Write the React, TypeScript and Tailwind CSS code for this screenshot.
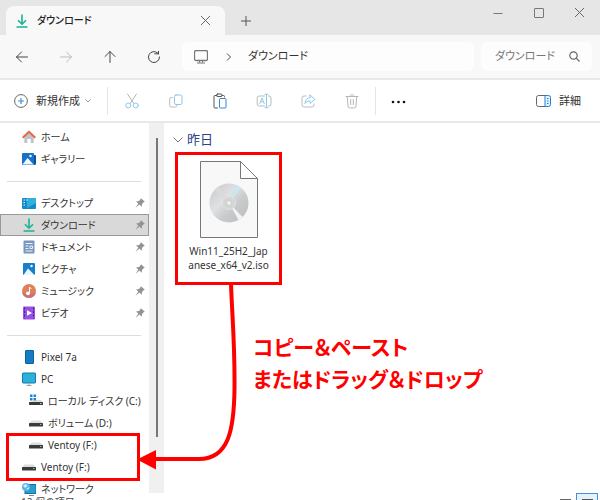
import type { ReactNode } from "react";
import { clsx } from "clsx";

type IconName =
  | "home"
  | "gallery"
  | "desktop"
  | "download"
  | "document"
  | "picture"
  | "music"
  | "video"
  | "phone"
  | "pc"
  | "system"
  | "drive"
  | "network";

type Place = {
  label: string;
  icon: IconName;
  pinned?: boolean;
  selected?: boolean;
  nested?: boolean;
};

const topPlaces: Place[] = [
  { label: "ホーム", icon: "home" },
  { label: "ギャラリー", icon: "gallery" },
];

const quickAccess: Place[] = [
  { label: "デスクトップ", icon: "desktop", pinned: true },
  { label: "ダウンロード", icon: "download", pinned: true, selected: true },
  { label: "ドキュメント", icon: "document", pinned: true },
  { label: "ピクチャ", icon: "picture", pinned: true },
  { label: "ミュージック", icon: "music", pinned: true },
  { label: "ビデオ", icon: "video", pinned: true },
];

const devices: Place[] = [
  { label: "Pixel 7a", icon: "phone" },
  { label: "PC", icon: "pc" },
  { label: "ローカル ディスク (C:)", icon: "system", nested: true },
  { label: "ボリューム (D:)", icon: "drive", nested: true },
];

const ventoyDrives: Place[] = [
  { label: "Ventoy (F:)", icon: "drive", nested: true },
  { label: "Ventoy (F:)", icon: "drive" },
];

export default function App() {
  return (
    <div className="relative flex h-screen flex-col overflow-hidden bg-white font-['Noto_Sans','Noto_Sans_CJK_JP',sans-serif] text-[11px] text-[#333] [font-feature-settings:'palt']">
      <TitleBar />
      <AddressBar />
      <Toolbar />
      <div className="flex min-h-0 flex-1">
        <Sidebar />
        <FileArea />
      </div>
      <StatusBar />
      <DragArrow />
    </div>
  );
}

function TitleBar() {
  return (
    <header className="flex h-[35px] shrink-0 items-end bg-[#e6e6e6] pl-[6px]">
      <div className="flex h-[29px] w-[219px] items-center rounded-t-lg bg-[#f8f8f8] pr-[14px] pl-[9px]">
        <PlaceIcon name="download" />
        <span className="ml-2 flex-1 text-[10px] font-medium text-[#222]">ダウンロード</span>
        <button aria-label="タブを閉じる">
          <Cross className="size-[11px]" />
        </button>
      </div>
      <button aria-label="新しいタブ" className="flex h-[29px] w-[41px] items-center justify-center">
        <svg viewBox="0 0 10 10" className="size-[10px]" fill="none" stroke="#555">
          <path d="M5 0v10M0 5h10" />
        </svg>
      </button>
      <div className="mb-[9px] ml-auto flex h-[27px] items-center">
        <button aria-label="最小化" className="flex w-[41px] justify-center">
          <svg viewBox="0 0 10 10" className="size-[10px]" fill="none" stroke="#777">
            <path d="M0.500 5.500h9" />
          </svg>
        </button>
        <button aria-label="最大化" className="flex w-[41px] justify-center">
          <svg viewBox="0 0 10 10" className="size-[10px]" fill="none" stroke="#777">
            <rect x="0.500" y="0.500" width="9" height="9" rx="0.500" />
          </svg>
        </button>
        <button aria-label="閉じる" className="flex w-[41px] justify-center">
          <Cross className="size-[11px]" />
        </button>
      </div>
    </header>
  );
}

function Cross({ className }: { className: string }) {
  return (
    <svg viewBox="0 0 11 11" className={className} fill="none" stroke="#666">
      <path d="M1 1l9 9M10 1l-9 9" />
    </svg>
  );
}

function NavButton({ label, children }: { label: string; children: ReactNode }) {
  return (
    <button aria-label={label} className="flex w-11 justify-center">
      <svg viewBox="0 0 12 12" className="size-3" fill="none" stroke="currentColor" strokeLinecap="round" strokeLinejoin="round">
        {children}
      </svg>
    </button>
  );
}

function AddressBar() {
  return (
    <div className="flex h-[45px] shrink-0 items-center border-b-2 border-[#e8e8e8] bg-[#f8f8f8] pr-2 text-[#444]">
      <NavButton label="戻る">
        <path d="M11.500 6h-11M5.500 1L0.500 6l5 5" />
      </NavButton>
      <div className="text-[#bbb]">
        <NavButton label="進む">
          <path d="M0.500 6h11M6.500 1l5 5l-5 5" />
        </NavButton>
      </div>
      <NavButton label="上へ">
        <path d="M6 11.500v-11M1 5.500L6 0.500l5 5" />
      </NavButton>
      <NavButton label="更新">
        <path d="M11.500 6A5.500 5.500 0 1 1 9.500 1.800M6.800 2.800h3.700M10.500 0v2.800" />
      </NavButton>
      <div className="ml-[6px] flex h-[29px] flex-1 items-center rounded-md bg-[#fdfdfd] pl-3 text-[#333]">
        <svg viewBox="0 0 14 14" className="size-[14px]" fill="none" stroke="#777">
          <rect x="0.500" y="0.500" width="13" height="10" rx="1.500" strokeWidth="1.300" />
          <path d="M3 13h8M5.500 10.500v2M8.500 10.500v2" />
        </svg>
        <svg viewBox="0 0 6 8" className="mr-4 ml-[18px] h-2 w-[6px]" fill="none" stroke="#444">
          <path d="M1 0.500L4.500 4L1 7.500" />
        </svg>
        <span>ダウンロード</span>
      </div>
      <label className="ml-[7px] flex h-[29px] w-[111px] items-center rounded-md bg-[#fdfdfd] pr-3 pl-[14px]">
        <input
          aria-label="検索"
          placeholder="ダウンロード"
          className="w-0 flex-1 bg-transparent outline-none placeholder:text-[#777]"
        />
        <svg viewBox="0 0 11 11" className="size-[11px]" fill="none" stroke="#666" strokeWidth="1.200">
          <circle cx="4.500" cy="4.500" r="3.700" />
          <path d="M7.200 7.200L10.500 10.500" />
        </svg>
      </label>
    </div>
  );
}

function ToolButton({ label, children }: { label: string; children: ReactNode }) {
  return (
    <button aria-label={label} className="flex w-11 justify-center">
      <svg viewBox="0 0 16 16" className="size-4" fill="none" strokeLinecap="round" strokeLinejoin="round">
        {children}
      </svg>
    </button>
  );
}

function Toolbar() {
  return (
    <div className="flex h-[43px] shrink-0 items-center border-b-2 border-[#e8e8e8] bg-white">
      <button className="flex w-[107px] items-center pl-[14px]">
        <svg viewBox="0 0 14 14" className="size-[14px]" fill="none">
          <circle cx="7" cy="7" r="6.400" stroke="#666" />
          <path d="M7 4v6M4 7h6" stroke="#3c8fd4" strokeWidth="1.200" />
        </svg>
        <span className="ml-2 flex-1 pt-[2px] text-left">新規作成</span>
        <svg viewBox="0 0 6 4" className="mr-4 h-1 w-[6px]" fill="none" stroke="#999">
          <path d="M0.500 0.500L3 3L5.500 0.500" />
        </svg>
      </button>
      <div className="h-7 w-px bg-[#e5e5e5]" />
      <div className="flex pl-[2px]">
        <ToolButton label="切り取り">
          <path d="M3.500 1l6.300 9.500M12.500 1L6.200 10.500" stroke="#b5b5b5" />
          <circle cx="4.200" cy="12.500" r="2.500" stroke="#8fcaf0" />
          <circle cx="11.800" cy="12.500" r="2.500" stroke="#8fcaf0" />
        </ToolButton>
        <ToolButton label="コピー">
          <path d="M4.500 4.500H3.200A1.500 1.500 0 0 0 1.700 6v6.500A1.500 1.500 0 0 0 3.200 14H7.500a1.500 1.500 0 0 0 1.500-1.500" stroke="#bbb" />
          <rect x="6.500" y="2" width="7.500" height="9.500" rx="1.500" stroke="#8fc4ec" />
        </ToolButton>
        <ToolButton label="貼り付け">
          <path d="M5 2.500H3A1 1 0 0 0 2 3.500v10.500a1 1 0 0 0 1 1H5.500M10 2.500h1.500a1 1 0 0 1 1 1V4" stroke="#555" />
          <rect x="4.500" y="1" width="5.500" height="2.500" rx="1" stroke="#555" />
          <rect x="7.500" y="5.500" width="6.500" height="9.500" rx="1" stroke="#3c84cc" />
        </ToolButton>
        <ToolButton label="名前の変更">
          <path d="M8.500 3H3.200A2 2 0 0 0 1.200 5v6a2 2 0 0 0 2 2H8.500M12.500 3h.5a2 2 0 0 1 2 2v6a2 2 0 0 1-2 2h-.5" stroke="#bbb" />
          <path d="M3.700 10.500L6 5l2.300 5.500M4.500 8.800h3M10.500 1.500v13M9 1.300h3M9 14.700h3" stroke="#8fcaf0" />
        </ToolButton>
        <ToolButton label="共有">
          <path d="M6 3H4A2 2 0 0 0 2 5v7a2 2 0 0 0 2 2h8a2 2 0 0 0 2-2v-1" stroke="#bbb" />
          <path d="M10 2l5 4.300l-5 4.200V8C7.500 8 6 9 5 10.500C5.200 7 7 4.700 10 4.500z" stroke="#8fcaf0" />
        </ToolButton>
        <ToolButton label="削除">
          <path d="M2 3.500h12M6 3.500C6 0.800 10 0.800 10 3.500M3.200 3.500l.9 10a1.500 1.500 0 0 0 1.500 1.400h4.800a1.500 1.500 0 0 0 1.500-1.400l.9-10M6.700 6.500v5M9.300 6.500v5" stroke="#b5b5b5" />
        </ToolButton>
      </div>
      <div className="ml-px h-7 w-px bg-[#e5e5e5]" />
      <ToolButton label="もっと見る">
        <g fill="#111">
          <circle cx="3" cy="9" r="1.300" />
          <circle cx="8.500" cy="9" r="1.300" />
          <circle cx="14" cy="9" r="1.300" />
        </g>
      </ToolButton>
      <button className="mr-[19px] ml-auto flex items-center gap-2">
        <svg viewBox="0 0 15 12" className="h-3 w-[15px]" fill="none">
          <path d="M9 0.500H2.500a2 2 0 0 0-2 2v7a2 2 0 0 0 2 2H9" stroke="#666" />
          <path d="M9 0.500h3.500a2 2 0 0 1 2 2v7a2 2 0 0 1-2 2H9z" fill="#e0f2ff" stroke="#2780d0" />
          <path d="M11 3.500h1.500M11 6h1.500M11 8.500h1.500" stroke="#2780d0" />
        </svg>
        <span className="pt-[2px]">詳細</span>
      </button>
    </div>
  );
}

function Sidebar() {
  return (
    <div className="flex shrink-0 text-[10px] leading-3">
      <nav className="w-[149px] pt-[3px]">
        <PlaceList places={topPlaces} />
        <Divider />
        <PlaceList places={quickAccess} />
        <Divider />
        <PlaceList places={devices} />
        <div className="relative">
          <PlaceList places={ventoyDrives} />
          <div className="pointer-events-none absolute -top-px right-[9px] -bottom-[3px] left-[6px] border-3 border-[#f00]" />
        </div>
        <PlaceList places={[{ label: "ネットワーク", icon: "network" }]} />
      </nav>
      <div className="flex w-[15px] justify-center bg-[#f0f0f0] pt-[15px] pb-14">
        <div className="w-[2px] bg-[#777]" />
      </div>
    </div>
  );
}

function Divider() {
  return (
    <div className="flex h-[22px] items-center pr-2 pl-[7px]">
      <hr className="w-full border-[#ddd]" />
    </div>
  );
}

function PlaceList({ places }: { places: Place[] }) {
  return (
    <ul>
      {places.map((p, i) => (
        <li key={p.label + i}>
          <a
            href="#"
            className={clsx(
              "flex h-[22px] items-center gap-[5px] border pr-[3px] whitespace-nowrap",
              p.nested ? "pl-7" : "pl-[21px]",
              p.selected ? "border-[#999] bg-[#d9d9d9]" : "border-transparent",
            )}
          >
            <PlaceIcon name={p.icon} />
            <span className="flex-1">{p.label}</span>
            {p.pinned && <Pin />}
          </a>
        </li>
      ))}
    </ul>
  );
}

function Pin() {
  return (
    <svg viewBox="0 0 10 10" className="size-[10px]" fill="#8f9499">
      <path d="M6 0.300L9.800 3.800L8.300 4.600L7 6L6.800 8.700L4.400 6.600L0.400 9.900L3.300 5.600L1 3.500L4 3L5.200 1.700z" />
    </svg>
  );
}

function PlaceIcon({ name }: { name: IconName }) {
  return (
    <svg viewBox="0 0 14 14" className="size-[14px] shrink-0" fill="none">
      {iconShapes[name]}
    </svg>
  );
}

const iconShapes: Record<IconName, ReactNode> = {
  home: (
    <>
      <path d="M2.300 6.500L7 2.500l4.700 4V13H8.700V9H5.300v4h-3z" fill="#bfc5cc" />
      <path d="M0.700 7.700L7 1.700l6.300 6" stroke="#e56a43" strokeWidth="2" strokeLinejoin="round" />
    </>
  ),
  gallery: (
    <>
      <path d="M12 3h1a1 1 0 0 1 1 1v8.500L12 13z" fill="#17508f" />
      <rect y="1" width="12" height="12" rx="1" fill="#1673c8" />
      <path d="M0.500 12.500L5.500 6L11.500 12.500z" fill="#f2f9ff" />
      <circle cx="8.500" cy="4" r="1.200" fill="#fff" />
    </>
  ),
  desktop: (
    <>
      <rect y="2" width="14" height="11" rx="1" fill="#1689cc" />
      <path d="M5 2h8a1 1 0 0 1 1 1v4L5 12z" fill="#2eb2dc" />
      <path d="M1.500 4h1.500M4 4h1.500M1.500 6.500h1.500M1.500 9h1.500" stroke="#d9f6ff" />
    </>
  ),
  download: (
    <path d="M7 0.500v9.500M3 6.200l4 4l4-4M1.500 13h11" stroke="#1bb394" strokeWidth="1.600" />
  ),
  document: (
    <>
      <rect x="1.500" y="0.500" width="11" height="13" rx="1" fill="#7897bd" />
      <path d="M3.500 3.500h7M3.500 6h3M3.500 8.500h3M8 6h2.500v2.500H8zM3.500 11h7" stroke="#edf4fc" />
    </>
  ),
  picture: (
    <>
      <rect x="1" y="1" width="12" height="12" rx="1" fill="#147fca" />
      <path d="M1.500 13L6 6.500L12.500 13z" fill="#e9f7ff" />
      <circle cx="9.500" cy="4" r="1.200" fill="#fff" />
    </>
  ),
  music: (
    <>
      <circle cx="7" cy="7" r="7" fill="#df8058" />
      <path d="M0.200 8.500A7 7 0 0 0 13.800 8.500C10 11 4 11 0.200 8.500z" fill="#c96f7c" />
      <circle cx="6" cy="9.300" r="1.900" fill="#fff" />
      <path d="M7.500 9.300V3L9.500 5" stroke="#fff" />
    </>
  ),
  video: (
    <>
      <rect x="1" y="0.500" width="12" height="13" rx="1" fill="#9750e3" />
      <path d="M2.500 1.500v11M11.500 1.500v11" stroke="#40208b" strokeDasharray="2 1.500" />
      <path d="M5 4.200L10 7L5 9.800z" fill="#fff" />
    </>
  ),
  phone: (
    <rect x="3.500" y="0.500" width="8" height="13" rx="0.500" fill="#147bc4" stroke="#0b609d" />
  ),
  pc: (
    <>
      <rect x="0.500" y="1" width="13" height="10" rx="0.500" fill="#2ab3d5" stroke="#1877b7" />
      <path d="M7 11v2.500M4.500 13.500h5" stroke="#9ba3a9" />
    </>
  ),
  system: (
    <>
      <path d="M6 6h6l2 2.500H0z" fill="#ddd" />
      <path d="M1 0.500h2.500v2.500H1zM4.500 0.500h2.500v2.500H4.500zM1 4h2.500v2.500H1zM4.500 4h2.500v2.500H4.500z" fill="#1686d8" />
      <rect y="8" width="14" height="3" rx="0.500" fill="#3a3a3a" />
      <rect x="11" y="9" width="1.500" height="1" fill="#ccc" />
    </>
  ),
  drive: (
    <>
      <path d="M2.500 4.500h9L14 7.500H0z" fill="#ddd" />
      <rect y="7" width="14" height="3.500" rx="0.500" fill="#3a3a3a" />
      <rect x="11" y="8" width="1.500" height="1" fill="#6fd66f" />
    </>
  ),
  network: (
    <>
      <rect x="3" y="2.500" width="11" height="9" fill="#299dce" stroke="#156da9" />
      <path d="M7 13.500h5" stroke="#888" />
      <circle cx="4" cy="5" r="4" fill="#5ab5e5" />
      <path d="M1 3.500L4 2l1.500 2L3 6zM4.500 6.500L7.500 5L6 8z" fill="#d0eff9" />
    </>
  ),
};

function FileArea() {
  return (
    <main className="min-w-0 flex-1 pt-2 pl-[9px]">
      <h2 className="flex h-[18px] items-center gap-1 text-[13px] text-[#2c4282]">
        <svg viewBox="0 0 10 6" className="h-[6px] w-[10px]" fill="none" stroke="#777">
          <path d="M0.500 0.500L5 5L9.500 0.500" />
        </svg>
        昨日
      </h2>
      <figure className="mt-[3px] ml-[2px] flex h-[133px] w-[107px] flex-col items-center border-3 border-[#f00] pt-[6px]">
        <DiscImage />
        <figcaption className="mt-[6px] text-center text-[10px] leading-[14px]">
          Win11_25H2_Jap
          <br />
          anese_x64_v2.iso
        </figcaption>
      </figure>
      <p className="mt-[46px] ml-20 text-[21px] leading-8 font-bold text-[#f00]">
        コピー＆ペースト
        <br />
        またはドラッグ＆ドロップ
      </p>
    </main>
  );
}

function DiscImage() {
  return (
    <svg viewBox="0 0 58 77" className="h-[77px] w-[58px]">
      <defs>
        <linearGradient id="disc" x1="0" y1="0" x2="1" y2="1">
          <stop offset="0" stopColor="#c4c6c8" />
          <stop offset="0.400" stopColor="#e0e1e2" />
          <stop offset="0.600" stopColor="#c9cbcc" />
          <stop offset="1" stopColor="#b9bbbd" />
        </linearGradient>
      </defs>
      <path d="M0.500 0.500h40l17 17v59h-57z" fill="#f8f8f8" stroke="#777" />
      <path d="M40.500 0.500v17h17z" fill="#fff" stroke="#777" />
      <circle cx="29" cy="42" r="19.500" fill="url(#disc)" />
      <path d="M29 42L36 24a19.500 19.500 0 0 1 5 3z" fill="#c9e6f2" />
      <path d="M29 42L42.500 56a19.500 19.500 0 0 1-4 3z" fill="#f4f4f4" />
      <path d="M29 42L14 29.500a19.500 19.500 0 0 1 5-4.500z" fill="#d8d9da" />
      <circle cx="29" cy="42" r="6.500" fill="#d4d5d6" stroke="#e4e4e4" />
      <circle cx="29" cy="42" r="2.500" fill="#f0f0f0" stroke="#ccc" />
    </svg>
  );
}

function StatusBar() {
  return (
    <footer className="flex h-[7px] shrink-0 items-start pr-[2px] pl-[21px] text-[10px] leading-3 text-[#444]">
      <span className="pt-[3px]">12 個の項目</span>
      <div className="ml-auto flex items-start gap-1">
        <button aria-label="詳細表示" className="px-[1px] pt-[6px]">
          <svg viewBox="0 0 11 8" className="h-2 w-[11px]" fill="none" stroke="#666">
            <path d="M0 0.500h11M0 3.500h11M0 6.500h11" />
          </svg>
        </button>
        <button aria-label="大アイコン" className="flex h-[22px] w-[22px] justify-center border border-[#4a8fd8] bg-[#e3f2fd] pt-[5px]">
          <svg viewBox="0 0 11 8" className="h-2 w-[11px]" fill="#fff" stroke="#555">
            <rect x="0.500" y="0.500" width="10" height="7" />
          </svg>
        </button>
      </div>
    </footer>
  );
}

// Runs from the ISO file down to the Ventoy drive
function DragArrow() {
  return (
    <svg viewBox="0 0 104 190" className="pointer-events-none absolute top-[284px] left-[137px] h-[190px] w-[104px]" fill="none">
      <path d="M94 0C95 30 98 60 97.500 105C97 145 92 175 62 175H18" stroke="#f00" strokeWidth="4" />
      <path d="M0 175.500L19 166v19.500z" fill="#f00" />
    </svg>
  );
}
